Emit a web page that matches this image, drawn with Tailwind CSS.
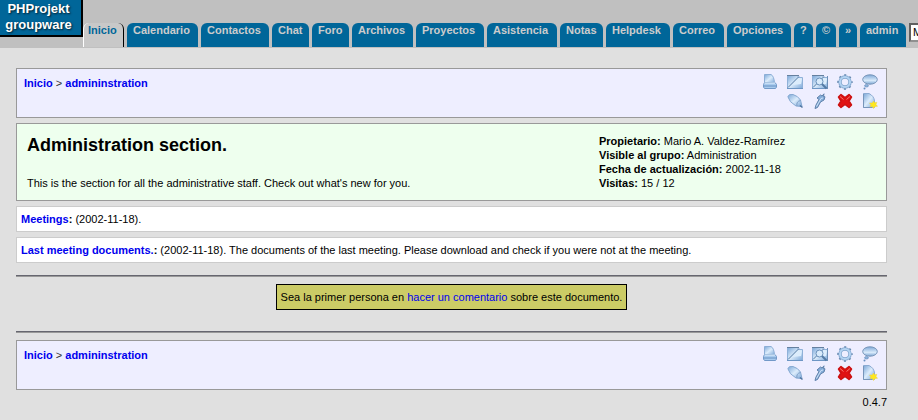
<!DOCTYPE html>
<html lang="es">

<head>
    <meta charset="UTF-8">
    <meta name="viewport" content="width=device-width, initial-scale=1.0">
    <title>PHProjekt groupware</title>
    <script src="https://cdn.jsdelivr.net/npm/@tailwindcss/browser@4"></script>
</head>

<body class="bg-[#e0e0e0] font-['Liberation_Sans',Arial,sans-serif] text-[11px] leading-[14px] text-black overflow-x-hidden">
    <!-- icons shared by both toolbars -->
    <svg class="absolute w-0 h-0" aria-hidden="true">
        <defs>
            <linearGradient id="blue" x1="0" y1="0" x2="1" y2="1">
                <stop offset="0" stop-color="#7ba7d8" />
                <stop offset=".5" stop-color="#dcecfb" />
                <stop offset="1" stop-color="#7ba7d8" />
            </linearGradient>
            <linearGradient id="fade" x1="0" y1="0" x2="0" y2="1">
                <stop offset="0" stop-color="#7fa9d8" />
                <stop offset=".6" stop-color="#d8eafa" />
                <stop offset="1" stop-color="#7aa5d4" />
            </linearGradient>
            <symbol id="print" viewBox="0 0 16 16">
                <path d="M2.500 9V.5H9Q12 2 12.500 9Z" fill="url(#blue)" stroke="#8caed6" />
                <path d="M1.500 10.500L2.500 8.500H13L14.500 10.500V13L13.500 14.500H2.500L1.500 13Z" fill="#a9cbee" stroke="#7299c8" />
                <path d="M2.500 9H13" stroke="#e3f0fc" />
                <path d="M2 12H14" stroke="#6690c2" />
            </symbol>
            <symbol id="folder" viewBox="0 0 16 16">
                <path d="M.5 1.500H10.500L11.500 3.500H15.500V14.500H.5Z" fill="url(#blue)" stroke="#8fb1d8" />
                <path d="M0 1.500H12" stroke="#65809f" />
                <path d="M10 4.500H15L14 10L6 11Z" fill="#dcedfc" />
                <path d="M1 13.500L12 2.500" stroke="#557ba4" />
                <path d="M0 14.500H16" stroke="#6d96c4" />
            </symbol>
            <symbol id="search" viewBox="0 0 16 16">
                <use href="#folder" />
                <path d="M15.500 2V15" stroke="#6d8fb6" />
                <circle cx="7.500" cy="7.500" r="3.500" fill="#d9ebfb" stroke="#6a90ba" />
                <path d="M10 10L14.500 14.500" stroke="#557ba4" stroke-width="2" />
            </symbol>
            <symbol id="gear" viewBox="0 0 16 16">
                <circle cx="8" cy="8" r="6.900" fill="none" stroke="#6688ae" stroke-width="1.700" stroke-dasharray="2 3.419" stroke-dashoffset="1" />
                <circle cx="8" cy="8" r="5" fill="none" stroke="#7fa4cd" stroke-width="3.400" />
                <circle cx="8" cy="8" r="5" fill="none" stroke="#b4d4f2" stroke-width="2" />
            </symbol>
            <symbol id="comment" viewBox="0 0 16 16">
                <ellipse cx="8" cy="5.500" rx="7.300" ry="4.700" fill="url(#fade)" stroke="#7795b8" />
                <ellipse cx="4.500" cy="11.800" rx="2" ry="1.200" fill="#8eb5df" stroke="#6287b4" stroke-width=".6" />
                <circle cx="2.500" cy="14.500" r="1" fill="#668fc0" />
            </symbol>
            <symbol id="edit" viewBox="0 0 16 16">
                <path d="M.8 3.500Q2 .8 6 1.500Q11 3 13.500 7L15 13.500L9 13Q2 9 .8 3.500Z" fill="url(#blue)" stroke="#86a9d2" />
                <path d="M10 13Q9 8.500 13.500 7.500" fill="none" stroke="#7b9dc6" />
                <path d="M13 12.500L15.500 14.500" stroke="#4e749f" stroke-width="1.500" />
            </symbol>
            <symbol id="tool" viewBox="0 0 16 16">
                <path d="M5 5L8.500 2L10 3L12 .8L11.500 3.500L13 3.800L12 7L8.500 9L5.500 14.500L3 15.500L4 12L7 6.500Z" fill="#85add9" stroke="#5f81aa" />
                <path d="M4.500 13.500L9 5.500L11 5" fill="none" stroke="#cfe2f7" />
            </symbol>
            <symbol id="delete" viewBox="0 0 16 16">
                <path d="M1.500 4L4 1.500L8 4.500L12 1.500L14.500 4L12 8L14.500 12L12 14.500L8 11.500L4 14.500L1.500 12L4 8Z" fill="#e01212" stroke="#cc1111" stroke-width="1.500" stroke-linejoin="round" />
                <path d="M3 3.500L6.500 6.500M13 3.500L9.500 6.500" stroke="#f47a70" />
            </symbol>
            <symbol id="new" viewBox="0 0 16 16">
                <path d="M1.500 .5H7Q12 3 12.500 8V14.500H1.500Z" fill="url(#blue)" stroke="#8babd2" />
                <path d="M1.500 1V14.500H10" fill="none" stroke="#7795ba" />
                <path d="M11.500 8L12.500 9.800L14.800 9.300L14 11.500L15.500 13.300L13 13.500L11.500 15.500L10.300 13.500L8 13.800L8.900 11.800L7.500 10L10.300 9.900Z" fill="#ffe81c" stroke="#ecd040" stroke-width=".5" />
            </symbol>
        </defs>
    </svg>

    <header class="flex items-start h-12 bg-[#c0c0c0] font-bold whitespace-nowrap">
        <a href="#" class="shrink-0 w-[83px] h-[37px] pr-1 pt-px bg-[#006699] border-r-2 border-b-2 border-black text-white text-[13px] leading-4 text-center [text-shadow:1px_1px_2px_#002030]">PHProjekt<br>groupware</a>
        <nav class="flex gap-[3px] pt-[23px] leading-[15px] text-[#cccccc]">
            <a href="#" class="w-[41px] h-6 pl-1 rounded-t-[6px] bg-[#c8c8c8] text-[#006699] border-l border-r border-l-white border-r-black">Inicio</a>
            <a href="#" class="w-[71px] h-6 pl-1.5 rounded-t-[6px] bg-[#006699]">Calendario</a>
            <a href="#" class="w-[68px] h-6 pl-1.5 rounded-t-[6px] bg-[#006699]">Contactos</a>
            <a href="#" class="w-[37px] h-6 pl-1.5 rounded-t-[6px] bg-[#006699]">Chat</a>
            <a href="#" class="w-[37px] h-6 pl-1.5 rounded-t-[6px] bg-[#006699]">Foro</a>
            <a href="#" class="w-[61px] h-6 pl-1.5 rounded-t-[6px] bg-[#006699]">Archivos</a>
            <a href="#" class="w-[68px] h-6 pl-1.5 rounded-t-[6px] bg-[#006699]">Proyectos</a>
            <a href="#" class="w-[70px] h-6 pl-1.5 rounded-t-[6px] bg-[#006699]">Asistencia</a>
            <a href="#" class="w-[43px] h-6 pl-1.5 rounded-t-[6px] bg-[#006699]">Notas</a>
            <a href="#" class="w-[64px] h-6 pl-1.5 rounded-t-[6px] bg-[#006699]">Helpdesk</a>
            <a href="#" class="w-[51px] h-6 pl-1.5 rounded-t-[6px] bg-[#006699]">Correo</a>
            <a href="#" class="w-[64px] h-6 pl-1.5 rounded-t-[6px] bg-[#006699]">Opciones</a>
            <a href="#" class="w-[19px] h-6 pl-1.5 rounded-t-[6px] bg-[#006699]">?</a>
            <a href="#" class="w-[20px] h-6 pl-1.5 rounded-t-[6px] bg-[#006699]">©</a>
            <a href="#" class="w-[18px] h-6 pl-1.5 rounded-t-[6px] bg-[#006699]">»</a>
            <a href="#" class="w-[46px] h-6 pl-1.5 rounded-t-[6px] bg-[#006699]">admin</a>
            <select aria-label="M" class="appearance-none w-10 h-[19px] px-0.5 bg-white border-2 border-t-[#606060] border-l-[#606060] border-b-[#909090] border-r-[#909090] text-[11px] font-normal text-black">
                <option>M</option>
            </select>
        </nav>
    </header>

    <main class="ml-4 mr-[31px] mt-5">
        <div class="flex justify-between h-[50px] bg-[#eeeeff] border border-[#999999] pl-[7px] pr-2 pt-[5px]">
            <p class="pt-[2px] text-[#333333]"><a href="#" class="font-bold text-[#0000ee]">Inicio</a> &gt; <a href="#" class="font-bold text-[#0000ee]">admininstration</a></p>
            <div class="grid grid-cols-5 gap-x-[9px] gap-y-[3px] content-start">
                <button type="button" aria-label="Imprimir"><svg class="size-4"><use href="#print" /></svg></button>
                <button type="button" aria-label="Carpeta"><svg class="size-4"><use href="#folder" /></svg></button>
                <button type="button" aria-label="Buscar"><svg class="size-4"><use href="#search" /></svg></button>
                <button type="button" aria-label="Opciones"><svg class="size-4"><use href="#gear" /></svg></button>
                <button type="button" aria-label="Comentar"><svg class="size-4"><use href="#comment" /></svg></button>
                <button type="button" aria-label="Editar" class="col-start-2"><svg class="size-4"><use href="#edit" /></svg></button>
                <button type="button" aria-label="Herramientas"><svg class="size-4"><use href="#tool" /></svg></button>
                <button type="button" aria-label="Borrar"><svg class="size-4"><use href="#delete" /></svg></button>
                <button type="button" aria-label="Nuevo"><svg class="size-4"><use href="#new" /></svg></button>
            </div>
        </div>

        <div class="flex mt-[5px] bg-[#eeffee] border border-[#999999] p-2.5">
            <div class="w-[572px]">
                <h1 class="text-[18px] leading-[22px] font-bold">Administration section.</h1>
                <p class="mt-5">This is the section for all the administrative staff. Check out what's new for you.</p>
            </div>
            <div>
                <p><b>Propietario:</b> Mario A. Valdez-Ramírez</p>
                <p><b>Visible al grupo:</b> Administration</p>
                <p><b>Fecha de actualización:</b> 2002-11-18</p>
                <p><b>Visitas:</b> 15 / 12</p>
            </div>
        </div>

        <p class="mt-[5px] bg-white border border-[#cccccc] px-1 py-[5px]"><b><a href="#" class="text-[#0000ee]">Meetings</a>:</b> (2002-11-18).</p>
        <p class="mt-[5px] bg-white border border-[#cccccc] px-1 py-[5px]"><b><a href="#" class="text-[#0000ee]">Last meeting documents.</a>:</b> (2002-11-18). The documents of the last meeting. Please download and check if you were not at the meeting.</p>

        <hr class="mt-3 h-0 border-t border-b border-t-[#666670] border-b-[#999999]">
        <p class="w-fit mx-auto mt-[7px] px-1 py-[5px] bg-[#cccc66] border border-black">Sea la primer persona en <a href="#" class="text-[#0000ee]">hacer un comentario</a> sobre este documento.</p>
        <hr class="mt-[21px] h-0 border-t border-b border-t-[#666670] border-b-[#999999]">

        <div class="flex justify-between mt-[7px] h-[50px] bg-[#eeeeff] border border-[#999999] pl-[7px] pr-2 pt-[5px]">
            <p class="pt-[2px] text-[#333333]"><a href="#" class="font-bold text-[#0000ee]">Inicio</a> &gt; <a href="#" class="font-bold text-[#0000ee]">admininstration</a></p>
            <div class="grid grid-cols-5 gap-x-[9px] gap-y-[3px] content-start">
                <button type="button" aria-label="Imprimir"><svg class="size-4"><use href="#print" /></svg></button>
                <button type="button" aria-label="Carpeta"><svg class="size-4"><use href="#folder" /></svg></button>
                <button type="button" aria-label="Buscar"><svg class="size-4"><use href="#search" /></svg></button>
                <button type="button" aria-label="Opciones"><svg class="size-4"><use href="#gear" /></svg></button>
                <button type="button" aria-label="Comentar"><svg class="size-4"><use href="#comment" /></svg></button>
                <button type="button" aria-label="Editar" class="col-start-2"><svg class="size-4"><use href="#edit" /></svg></button>
                <button type="button" aria-label="Herramientas"><svg class="size-4"><use href="#tool" /></svg></button>
                <button type="button" aria-label="Borrar"><svg class="size-4"><use href="#delete" /></svg></button>
                <button type="button" aria-label="Nuevo"><svg class="size-4"><use href="#new" /></svg></button>
            </div>
        </div>
        <p class="mt-[5px] text-right">0.4.7</p>
    </main>
</body>

</html>
